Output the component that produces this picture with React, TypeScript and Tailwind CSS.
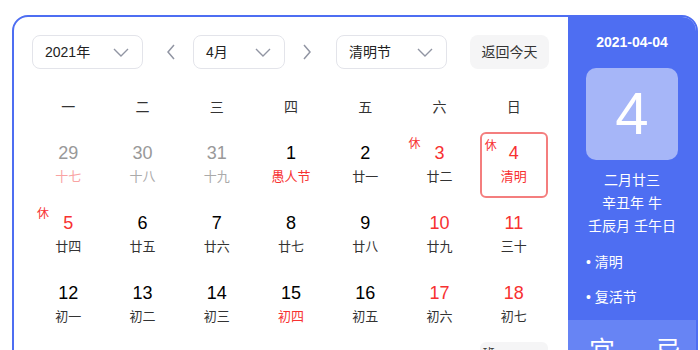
const FONT = { fontFamily: '"Liberation Sans", "Noto Sans CJK SC", sans-serif' };

type Day = {
  n: number;
  lunar: string;
  numColor?: string;
  lunarColor?: string;
  tag?: string;
  today?: boolean;
  work?: boolean;
};

const RED = "text-[#f73131]";

const days: Day[] = [
  { n: 29, lunar: "十七", numColor: "text-[#999]", lunarColor: "text-[#f9a3a3]" },
  { n: 30, lunar: "十八", numColor: "text-[#999]", lunarColor: "text-[#aaa]" },
  { n: 31, lunar: "十九", numColor: "text-[#999]", lunarColor: "text-[#aaa]" },
  { n: 1, lunar: "愚人节", lunarColor: RED },
  { n: 2, lunar: "廿一" },
  { n: 3, lunar: "廿二", numColor: RED, tag: "休" },
  { n: 4, lunar: "清明", numColor: RED, lunarColor: RED, tag: "休", today: true },
  { n: 5, lunar: "廿四", numColor: RED, tag: "休" },
  { n: 6, lunar: "廿五" },
  { n: 7, lunar: "廿六" },
  { n: 8, lunar: "廿七" },
  { n: 9, lunar: "廿八" },
  { n: 10, lunar: "廿九", numColor: RED },
  { n: 11, lunar: "三十", numColor: RED },
  { n: 12, lunar: "初一" },
  { n: 13, lunar: "初二" },
  { n: 14, lunar: "初三" },
  { n: 15, lunar: "初四", lunarColor: RED },
  { n: 16, lunar: "初五" },
  { n: 17, lunar: "初六", numColor: RED },
  { n: 18, lunar: "初七", numColor: RED },
  { n: 19, lunar: "初八" },
  { n: 20, lunar: "谷雨" },
  { n: 21, lunar: "初十" },
  { n: 22, lunar: "十一" },
  { n: 23, lunar: "十二" },
  { n: 24, lunar: "十三" },
  { n: 25, lunar: "十四", tag: "班", work: true },
];

function Chevron() {
  return (
    <svg width="16" height="9" viewBox="0 0 16 9" fill="none">
      <path d="M1 1l7 7 7-7" stroke="#9195a3" strokeWidth="1.4" />
    </svg>
  );
}

function Select({ label, w }: { label: string; w: string }) {
  return (
    <div className={`${w} h-[34px] border border-[#e3e4ea] rounded-[8px] flex items-center justify-between pl-[12px] pr-[13px] text-[14px] text-[#222]`}>
      <span>{label}</span>
      <Chevron />
    </div>
  );
}

function Cell({ d }: { d: Day }) {
  const box = d.today
    ? "border-2 border-[#f47e7e] rounded-[6px]"
    : d.work
    ? "bg-[#f5f5f6] rounded-[6px]"
    : "";
  return (
    <div className={`relative h-[66px] flex flex-col items-center pt-[11px] ${box}`}>
      {d.tag && (
        <span
          className={`absolute left-[3px] top-[4px] text-[12px] leading-[16px] ${d.work ? "text-[#333]" : RED}`}
        >
          {d.tag}
        </span>
      )}
      <span className={`text-[18px] leading-[20px] ${d.today ? "-mt-[2px]" : ""} ${d.numColor ?? "text-[#000]"}`}>{d.n}</span>
      <span className={`mt-[5px] text-[13px] leading-[18px] ${d.lunarColor ?? "text-[#333]"}`}>{d.lunar}</span>
    </div>
  );
}

export default function App() {
  return (
    <div className="w-[700px] h-[350px] overflow-hidden bg-white" style={FONT}>
      <div className="ml-[12px] mt-[15px] w-[686px] h-[420px] border-2 border-[#4e6ef2] rounded-t-[16px] flex overflow-hidden">
        {/* 左侧日历 */}
        <div className="w-[554px] pl-[18px] pt-[18px]">
          <div className="flex items-center">
            <Select label="2021年" w="w-[111px]" />
            <svg className="ml-[22px] mr-[16px]" width="12" height="16" viewBox="0 0 12 16" fill="none">
              <path d="M9 1L3 8l6 7" stroke="#9195a3" strokeWidth="1.5" />
            </svg>
            <Select label="4月" w="w-[92px]" />
            <svg className="ml-[16px] mr-[23px]" width="12" height="16" viewBox="0 0 12 16" fill="none">
              <path d="M3 1l6 7-6 7" stroke="#9195a3" strokeWidth="1.5" />
            </svg>
            <Select label="清明节" w="w-[111px]" />
            <button className="ml-[23px] w-[79px] h-[34px] rounded-[8px] bg-[#f5f5f6] text-[14px] text-[#333]">
              返回今天
            </button>
          </div>
          <div className="ml-[2px] w-[514px]">
            <div className="mt-[20px] h-[36px] grid grid-cols-7 gap-x-[6px] items-center text-center text-[14px] text-[#333]">
              {["一", "二", "三", "四", "五", "六", "日"].map((w) => (
                <span key={w}>{w}</span>
              ))}
            </div>
            <div className="mt-[7px] grid grid-cols-7 gap-x-[6px] gap-y-[4px]">
              {days.map((d) => (
                <Cell key={`${d.n}-${d.lunar}`} d={d} />
              ))}
            </div>
          </div>
        </div>

        {/* 右侧详情 */}
        <div className="flex-1 bg-[#4e6ef2] text-white flex flex-col">
          <div className="pt-[15px] text-center text-[14px] leading-[20px] font-bold">2021-04-04</div>
          <div className="mt-[16px] mx-auto w-[92px] h-[92px] rounded-[10px] bg-[#a6b6f8] flex items-center justify-center text-[60px] leading-none">
            4
          </div>
          <div className="mt-[9px] text-center text-[14px] leading-[23px]">
            <div>二月廿三</div>
            <div>辛丑年 牛</div>
            <div>壬辰月 壬午日</div>
          </div>
          <div className="mt-[7px] pl-[18px] text-[14px] leading-[35px]">
            <div>• 清明</div>
            <div>• 复活节</div>
          </div>
          <div className="mt-[5px] flex-1 bg-[#6784f4] flex pt-[16px] pl-[21px] gap-[40px] text-[26px] leading-[30px]">
            <span>宜</span>
            <span>忌</span>
          </div>
        </div>
      </div>
    </div>
  );
}
